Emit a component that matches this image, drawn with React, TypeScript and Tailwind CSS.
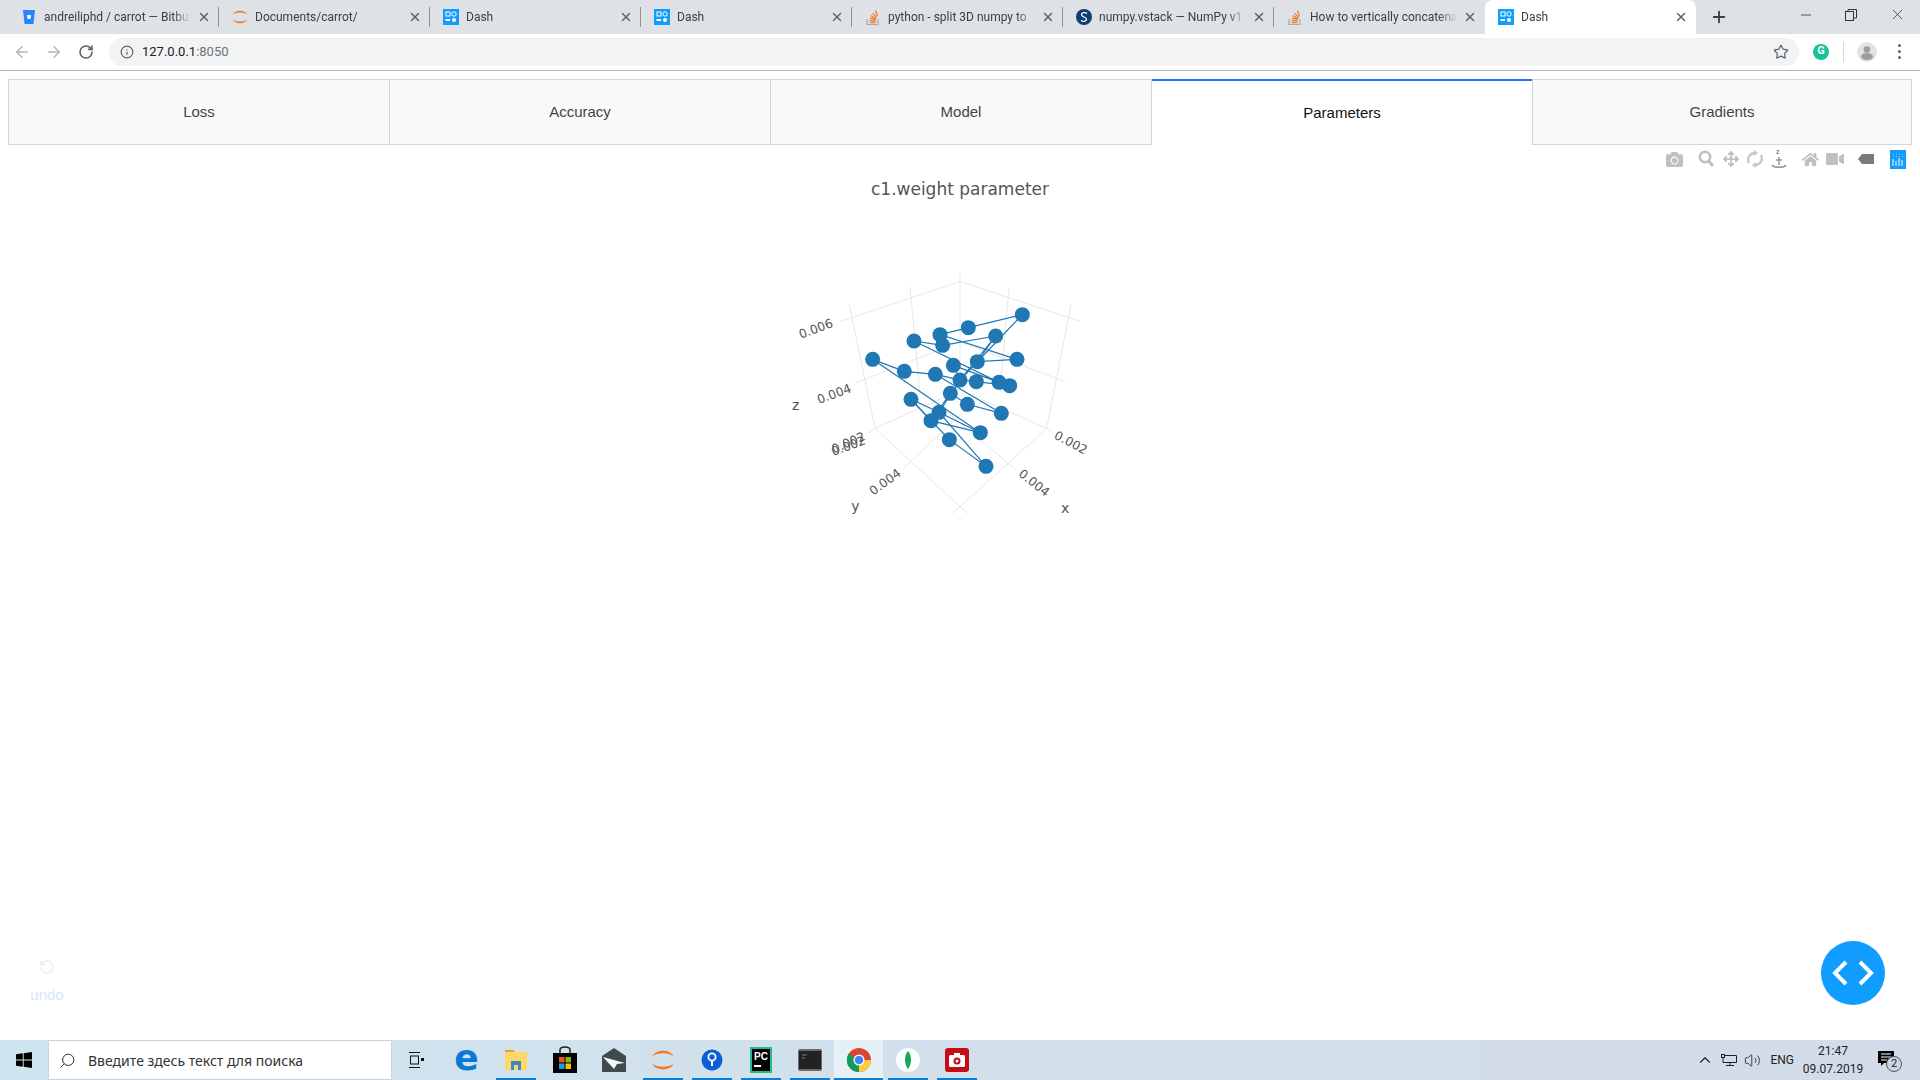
import React from "react";
import { FaCamera, FaHome, FaVideo, FaArrowsAlt } from "react-icons/fa";
import { ArrowLeft, ArrowRight, RotateCw, RotateCcw, Info, Star, X, Plus, Minus, Search, ChevronUp, Volume2 } from "lucide-react";

const Dash = () => (
  <svg width="16" height="16" viewBox="0 0 16 16" className="shrink-0">
    <rect width="16" height="16" fill="#119dff" />
    <rect x="3" y="3" width="4" height="4" fill="none" stroke="#fff" />
    <circle cx="11" cy="5" r="2.2" fill="none" stroke="#fff" />
    <rect x="2.5" y="10" width="4.5" height="2" fill="#fff" />
    <circle cx="11" cy="11" r="2" fill="#fff" />
  </svg>
);
const Bit = () => (
  <svg width="16" height="16" viewBox="0 0 16 16" className="shrink-0">
    <path d="M2 1h12l-1.6 14H3.6z" fill="#2684ff" />
    <path d="M6 6h4l-.5 4h-3z" fill="#fff" />
  </svg>
);
const Jup = ({ s = 16 }: { s?: number }) => (
  <svg width={s} height={s} viewBox="0 0 16 16" className="shrink-0">
    <path d="M1 5.500C3 .5 13 .5 15 5.500C12 2.800 4 2.800 1 5.500Z" fill="#f37726" />
    <path d="M1 10.500C3 15.500 13 15.500 15 10.500C12 13.200 4 13.200 1 10.500Z" fill="#f37726" />
  </svg>
);
const So = () => (
  <svg width="16" height="18" viewBox="0 0 16 18" className="shrink-0" fill="none">
    <path d="M2 11v5.500h11V11" stroke="#a8a8a8" strokeWidth="1.200" />
    <path d="M4.500 14.500h6M4.600 12.300l6 .6M5 10l5.800 1.500M6 7.600l5.200 3M7.800 5.200l4 4.200M10.500 2.500l2 5.500" stroke="#ef8236" strokeWidth="1.300" />
  </svg>
);
const Sci = () => (
  <svg width="16" height="16" viewBox="0 0 16 16" className="shrink-0">
    <circle cx="8" cy="8" r="8" fill="#0d3f73" />
    <path d="M11 4.500C9 3 5.500 3.500 5.500 5.800C5.500 8.300 10.500 7.700 10.500 10.300C10.500 12.500 7 13 5 11.500" fill="none" stroke="#fff" strokeWidth="1.300" />
  </svg>
);

const tabs = [
  { t: "andreiliphd / carrot — Bitbu", i: <Bit /> },
  { t: "Documents/carrot/", i: <Jup /> },
  { t: "Dash", i: <Dash /> },
  { t: "Dash", i: <Dash /> },
  { t: "python - split 3D numpy to", i: <So /> },
  { t: "numpy.vstack — NumPy v1.", i: <Sci /> },
  { t: "How to vertically concatena", i: <So /> },
  { t: "Dash", i: <Dash />, active: true },
];

const pts: [number, number][] = [
  [757,164],[595,203],[510,224],[677,228],[432,243],[518,256],[741,298],[622,305],[308,298],[550,316],[403,334],[496,343],[570,360],[619,365],[687,367],[719,377],[541,400],[423,418],[592,433],[694,460],[507,457],[483,482],[631,518],[538,539],[648,619],
];
const lines = [
  "757,164 595,203 510,224 741,298 622,305 677,228 518,256 510,224",
  "757,164 570,360 677,228",
  "432,243 687,367 719,377 619,365 570,360 550,316 687,367",
  "432,243 518,256",
  "308,298 403,334 496,343 694,460 592,433 541,400 483,482 538,539 648,619 507,457 423,418 538,539",
  "308,298 631,518 483,482 423,418",
  "496,343 570,360 507,457 631,518",
];
const grid = [
  "210,185 570,65 930,183","570,35 570,390","238,135 315,505","420,80 450,400","903,135 830,505","717,85 690,400",
  "315,505 570,740 595,760","830,505 570,740 545,760","315,505 570,390 830,505","400,625 640,400","740,630 500,430","255,370 570,245 885,365","295,520 315,505","850,520 830,505",
];
const labels: [string, number, number, number][] = [
  ["0.006", 92, 236, -20],
  ["0.004", 147, 432, -20],
  ["0.002", 190, 588, -20],
  ["0.002", 192, 581, -24],
  ["0.004", 310, 707, -36],
  ["0.002", 850, 534, 28],
  ["0.004", 743, 646, 38],
];

function Plot() {
  return (
    <svg width="380" height="260" viewBox="0 0 1140 780" className="mx-auto mt-[60px] block">
      {grid.map((p, i) => (
        <polyline key={i} points={p} fill="none" stroke="#e2e2e2" strokeWidth="2.500" />
      ))}
      {lines.map((p, i) => (
        <polyline key={i} points={p} fill="none" stroke="#1f77b4" strokeWidth="3.500" />
      ))}
      {pts.map(([x, y], i) => (
        <circle key={i} cx={x} cy={y} r="22.500" fill="#1f77b4" />
      ))}
      <g fontFamily="'DejaVu Sans', sans-serif" fontSize="37" fill="#555">
        {labels.map(([s, x, y, r], i) => (
          <text key={i} x={x} y={y} transform={`rotate(${r} ${x} ${y})`}>{s}</text>
        ))}
        <text x="66" y="450" fontSize="42">z</text>
        <text x="244" y="752" fontSize="42">y</text>
        <text x="873" y="758" fontSize="42">x</text>
      </g>
    </svg>
  );
}

const mbIcon = "text-[#c0c0c0]";

function ModeBar() {
  return (
    <div className="mt-[4px] flex h-5 items-center justify-end pr-[14px]">
      <FaCamera size={17} className={`${mbIcon} mr-[15px]`} />
      <svg width="17" height="18" viewBox="0 0 17 18" className="mr-[8px]" fill="none" stroke="#c0c0c0">
        <circle cx="7" cy="7" r="5.200" strokeWidth="2.600" />
        <path d="M10.500 11l4.500 5" strokeWidth="3" />
      </svg>
      <FaArrowsAlt size={16} className={`${mbIcon} mr-[8px]`} />
      <svg width="16" height="18" viewBox="0 0 16 18" className="mr-[8px]" fill="none" stroke="#c8c8c8" strokeWidth="2.400">
        <path d="M2 13C-.500 8 3 3 8 3" />
        <path d="M14 5c2.500 5-1 10-6 10" />
        <path d="M7 0v6l4-3zM9 12v6l-4-3z" fill="#c8c8c8" stroke="none" />
      </svg>
      <svg width="16" height="22" viewBox="0 0 16 22" className="mr-[15px]" fill="none" stroke="#999">
        <text x="5" y="6" fontSize="7" fontFamily="'Liberation Sans', sans-serif" fontWeight="700" fill="#888" stroke="none">z</text>
        <path d="M8 9v8M5 12h6" strokeWidth="1.500" />
        <path d="M1 17c2 3 12 3 14 0" strokeWidth="1.500" />
      </svg>
      <FaHome size={17} className={`${mbIcon} mr-[7px]`} />
      <FaVideo size={18} className={`${mbIcon} mr-[14px]`} />
      <svg width="16" height="10" viewBox="0 0 16 10" className="mr-[16px]">
        <path d="M4 0h12v10H4L0 5z" fill="#7a7a7a" />
      </svg>
      <svg width="16" height="19" viewBox="0 0 16 19">
        <rect width="16" height="19" fill="#119dff" />
        <path d="M3 9v7M6 11v5M9 8v8M12 10v6M3 4h.5M6 4h.5M9 4h.5M12 4h.5M3 6.500h.5M6 6.500h.5M9 6.500h.5M12 6.500h.5" stroke="#fff" strokeWidth="1" />
      </svg>
    </div>
  );
}

function TaskIcon({ children, on, active }: { children: React.ReactNode; on?: boolean; active?: boolean }) {
  return (
    <div className={`relative flex h-10 w-[49px] items-center justify-center ${active ? "bg-[#e6f1f6]" : ""}`}>
      {children}
      {on && <div className={`absolute bottom-0 h-[2px] ${active ? "left-0 right-0" : "left-[4.500px] w-10"} bg-[#0f7fd6]`} />}
    </div>
  );
}

export default function App() {
  return (
    <div className="flex h-[1080px] w-[1920px] flex-col overflow-hidden bg-white font-['Roboto',sans-serif]">
      {/* browser tabs */}
      <div className="flex h-[34px] shrink-0 bg-[#dee1e6] pl-2 pt-0">
        {tabs.map((t, i) => (
          <div
            key={i}
            className={`relative flex h-[34px] w-[211px] items-center pl-[13px] ${t.active ? "rounded-t-lg bg-white" : ""}`}
          >
            <div className="flex w-[23px] shrink-0 items-center">{t.i}</div>
            <div className="w-[150px] whitespace-nowrap text-[12px] text-[#3c4043] [mask-image:linear-gradient(to_right,black_86%,transparent_98%)]">
              {t.t}
            </div>
            <X size={14} strokeWidth={2.500} className="absolute left-[189px] text-[#5f6368]" />
            {!t.active && i < 6 && <div className="absolute right-0 top-[7px] h-5 w-px bg-[#8f9399]" />}
          </div>
        ))}
        <div className="flex h-[34px] w-[46px] items-center justify-center">
          <Plus size={18} strokeWidth={2.500} className="text-[#3c4043]" />
        </div>
        <div className="flex flex-1 items-start justify-end pr-[14px] pt-[5px] text-[#333]">
          <Minus size={16} strokeWidth={1.200} className="mr-[31px] mt-[2px]" />
          <svg width="12" height="12" viewBox="0 0 12 12" fill="none" stroke="#333" className="mr-[32px] mt-[4px]">
            <rect x=".5" y="2.500" width="8" height="9" />
            <path d="M3 2.500V.5h8.500V9H8.500" />
          </svg>
          <X size={17} strokeWidth={1.100} className="mt-[1px]" />
        </div>
      </div>

      {/* toolbar */}
      <div className="flex h-[37px] shrink-0 items-center border-b border-[#b7b7b7] bg-white pb-px">
        <ArrowLeft size={18} className="ml-[13px] text-[#b4b6b9]" />
        <ArrowRight size={18} className="ml-[14px] text-[#b4b6b9]" />
        <RotateCw size={16} strokeWidth={2.400} className="ml-[15px] text-[#5f6368]" />
        <div className="ml-[15px] flex h-7 w-[1690px] items-center rounded-full bg-[#f1f3f4] pl-[11px] pr-[10px]">
          <Info size={14} className="text-[#5f6368]" />
          <span className="ml-[8px] text-[13px] text-[#202124]">
            127.0.0.1<span className="text-[#70757a]">:8050</span>
          </span>
          <Star size={16} strokeWidth={1.800} className="ml-auto text-[#5f6368]" />
        </div>
        <div className="ml-[14px] flex h-4 w-4 items-center justify-center rounded-full bg-[#15c39a] text-[11px] font-bold text-white">G</div>
        <div className="ml-[14px] h-5 w-px bg-[#d6d6d6]" />
        <svg width="20" height="20" viewBox="0 0 20 20" className="ml-[13px]">
          <circle cx="10" cy="10" r="10" fill="#e3e3e3" />
          <circle cx="10" cy="7.500" r="3.300" fill="#9c9c9c" />
          <ellipse cx="10" cy="14.500" rx="6" ry="3.500" fill="#9c9c9c" />
        </svg>
        <div className="ml-[21px] flex flex-col gap-[3px]">
          <div className="h-[3px] w-[3px] rounded-full bg-[#5f6368]" />
          <div className="h-[3px] w-[3px] rounded-full bg-[#5f6368]" />
          <div className="h-[3px] w-[3px] rounded-full bg-[#5f6368]" />
        </div>
      </div>

      {/* page */}
      <div className="relative flex-1">
        <div className="mx-2 mt-2 flex h-[66px] font-['Liberation_Sans',sans-serif] text-[15px] text-[#444]">
          <div className="flex w-[382px] items-center justify-center border border-[#d6d6d6] bg-[#f9f9f9]">Loss</div>
          <div className="flex w-[381px] items-center justify-center border border-l-0 border-[#d6d6d6] bg-[#f9f9f9]">Accuracy</div>
          <div className="flex w-[381px] items-center justify-center border border-l-0 border-[#d6d6d6] bg-[#f9f9f9]">Model</div>
          <div className="flex w-[380px] items-center justify-center border-t-2 border-[#1975fa] bg-white pt-px text-[#111]">Parameters</div>
          <div className="flex flex-1 items-center justify-center border border-[#d6d6d6] bg-[#f9f9f9]">Gradients</div>
        </div>
        <ModeBar />
        <div className="mt-[9px] text-center font-['DejaVu_Sans',sans-serif] text-[17px] leading-[22px] text-[#555]">c1.weight parameter</div>
        <Plot />

        <div className="absolute bottom-[34px] left-[30px] flex w-[34px] flex-col items-center text-[#dae6f4]">
          <RotateCcw size={16} strokeWidth={1.500} />
          <span className="mt-[9px] font-['Liberation_Sans',sans-serif] text-[15px]">undo</span>
        </div>
        <div className="absolute bottom-[35px] right-[35px] flex h-16 w-16 items-center justify-center rounded-full bg-[#119dff]">
          <svg width="44" height="26" viewBox="0 0 44 26" fill="none" stroke="#fff" strokeWidth="4">
            <path d="M15 2L4 13l11 11M29 2l11 11-11 11" />
          </svg>
        </div>
      </div>

      {/* taskbar */}
      <div className="flex h-10 shrink-0 items-center bg-linear-to-r from-[#cfe5ef] to-[#d3dbe8] text-[#222]">
        <div className="flex w-[48px] items-center justify-center">
          <svg width="16" height="16" viewBox="0 0 16 16" fill="#000">
            <path d="M0 2.300L6.800 1.300V7.600H0zM7.700 1.200L16 0V7.600H7.700zM0 8.400H6.800V14.700L0 13.700zM7.700 8.400H16V16L7.700 14.800z" />
          </svg>
        </div>
        <div className="flex h-10 w-[344px] items-center border border-[#c9d3d9] bg-white pl-[10px] text-[14px] text-[#333]">
          <Search size={17} strokeWidth={1.300} className="-scale-x-100 text-[#222]" />
          <span className="ml-[12px] font-['Noto_Sans',sans-serif]">Введите здесь текст для поиска</span>
        </div>
        <div className="ml-px flex">
          <TaskIcon>
            <svg width="16" height="18" viewBox="0 0 16 18" fill="none" stroke="#111" className="-ml-[3px]">
              <path d="M1 1.500h11M1 16.500h11" />
              <rect x="2.500" y="5" width="8" height="8" />
              <rect x="13" y="7" width="3" height="3" fill="#111" stroke="none" />
            </svg>
          </TaskIcon>
          <TaskIcon>
            <span className="-mt-1 font-['DejaVu_Sans',sans-serif] text-[36px] font-bold leading-none text-[#0b78d7]">e</span>
          </TaskIcon>
          <TaskIcon on>
            <svg width="22" height="22" viewBox="0 0 22 22">
              <path d="M0 1h8l2 2H0z" fill="#e0a526" />
              <rect y="3" width="22" height="18" fill="#fdd868" />
              <rect x="6" y="12" width="10" height="9" fill="#3b88c9" />
              <rect x="9" y="16" width="4" height="5" fill="#fdd868" />
            </svg>
          </TaskIcon>
          <TaskIcon>
            <svg width="24" height="28" viewBox="0 0 24 28">
              <rect y="7" width="24" height="20" fill="#000" />
              <path d="M7 8V4c0-4 10-4 10 0v4" fill="none" stroke="#222" strokeWidth="1.500" />
              <rect x="6" y="11" width="5.500" height="5.500" fill="#f25022" />
              <rect x="12.500" y="11" width="5.500" height="5.500" fill="#7fba00" />
              <rect x="6" y="17.500" width="5.500" height="5.500" fill="#00a4ef" />
              <rect x="12.500" y="17.500" width="5.500" height="5.500" fill="#ffb900" />
            </svg>
          </TaskIcon>
          <TaskIcon>
            <svg width="24" height="24" viewBox="0 0 24 24">
              <path d="M0 8L12 0l12 8v16H0z" fill="#3f4a4f" />
              <path d="M1 9l22 6-8 1-3 5z" fill="#fff" opacity=".95" />
            </svg>
          </TaskIcon>
          <TaskIcon on>
            <Jup s={24} />
          </TaskIcon>
          <TaskIcon on>
            <svg width="22" height="26" viewBox="0 0 22 26">
              <circle cx="11" cy="13" r="10.500" fill="#0b5fd6" />
              <circle cx="11" cy="10" r="3.600" fill="none" stroke="#fff" strokeWidth="1.800" />
              <path d="M11 13v6" stroke="#fff" strokeWidth="2" />
            </svg>
          </TaskIcon>
          <TaskIcon on>
            <svg width="22" height="26" viewBox="0 0 22 26">
              <rect width="22" height="26" fill="#1fbd8b" />
              <rect x="2" y="2" width="18" height="22" fill="#000" />
              <text x="4" y="13" fontSize="10" fontWeight="700" fontFamily="'Liberation Sans', sans-serif" fill="#fff">PC</text>
              <rect x="4" y="18" width="7" height="2" fill="#fff" />
            </svg>
          </TaskIcon>
          <TaskIcon on>
            <svg width="24" height="22" viewBox="0 0 24 22">
              <rect width="24" height="22" rx="2" fill="#6a6a6a" />
              <rect x="1" y="2" width="22" height="18" fill="#222" />
              <path d="M4 6h5M4 9h3" stroke="#777" />
            </svg>
          </TaskIcon>
          <TaskIcon on active>
            <svg width="24" height="24" viewBox="0 0 24 24">
              <circle cx="12" cy="12" r="12" fill="#db4437" />
              <path d="M12 12L1.500 6A12 12 0 0 0 12 24z" fill="#0f9d58" />
              <path d="M12 12h12A12 12 0 0 1 12 24z" fill="#ffcd40" />
              <circle cx="12" cy="12" r="5.500" fill="#fff" />
              <circle cx="12" cy="12" r="4.300" fill="#4285f4" />
            </svg>
          </TaskIcon>
          <TaskIcon on>
            <svg width="24" height="24" viewBox="0 0 24 24">
              <circle cx="12" cy="12" r="12" fill="#fff" />
              <path d="M12 3c4 4 4 13 0 18c-4-5-4-14 0-18z" fill="#13aa52" />
            </svg>
          </TaskIcon>
          <TaskIcon on>
            <svg width="24" height="24" viewBox="0 0 24 24">
              <rect width="24" height="24" rx="3" fill="#c20e14" />
              <rect x="4" y="7" width="16" height="12" rx="1.500" fill="#fff" />
              <rect x="9" y="5" width="6" height="3" fill="#fff" />
              <circle cx="12" cy="13" r="3.500" fill="#c20e14" />
              <circle cx="12" cy="13" r="1.500" fill="#fff" />
            </svg>
          </TaskIcon>
        </div>

        <div className="ml-auto flex items-center text-[#222]">
          <ChevronUp size={18} strokeWidth={1.500} />
          <svg width="16" height="14" viewBox="0 0 16 14" fill="none" stroke="#222" className="ml-[7px]">
            <rect x=".5" y="1.500" width="3" height="3" />
            <path d="M3.500 2.500h12v7H2V5M9 9.500v3M5 12.500h8" />
          </svg>
          <Volume2 size={17} strokeWidth={1.200} className="ml-[7px]" />
          <span className="ml-[9px] text-[12px]">ENG</span>
          <div className="ml-[8px] flex w-[62px] flex-col items-center text-[12px] leading-[18px]">
            <span>21:47</span>
            <span>09.07.2019</span>
          </div>
          <div className="relative ml-[14px] mr-[26px] h-5 w-4">
            <svg width="16" height="16" viewBox="0 0 16 16" className="mt-px">
              <path d="M0 0h16v12H6l-3 3v-3H0z" fill="#000" />
              <path d="M3 3h10M3 6h10M3 9h6" stroke="#fff" />
            </svg>
            <div className="absolute left-[8px] top-[6px] flex h-4 w-4 items-center justify-center rounded-full border border-[#555] bg-[#ccd5e2] text-[11px]">2</div>
          </div>
        </div>
      </div>
    </div>
  );
}
